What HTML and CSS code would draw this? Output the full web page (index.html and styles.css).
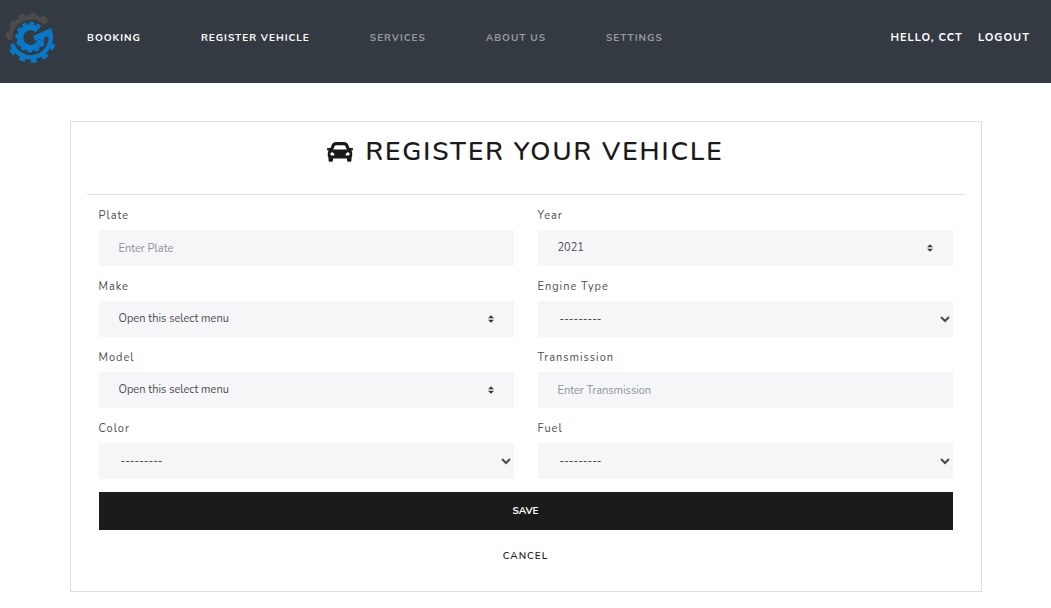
FILE: index.html
```html
<!DOCTYPE html>
<html lang="en">
<head>
<meta charset="utf-8">
<meta name="viewport" content="width=device-width, initial-scale=1">
<title>Register your vehicle</title>
<link rel="stylesheet" href="styles.css">
</head>
<body>
<header class="navbar">
  <a class="brand" href="#" aria-label="Home">
    <svg class="logo" viewBox="17 38 150 156" fill="none" aria-hidden="true">
      <g stroke="#4b4b4b">
        <path d="M30 121A62 62 0 0 1 137 73" stroke-width="14"/>
        <path d="M23 121A69 69 0 0 1 145 70" stroke-width="12" stroke-dasharray="18 18" stroke-dashoffset="-5"/>
      </g>
      <g stroke="#0878c8">
        <path d="M35 134A60 60 0 0 0 151 106" stroke-width="13"/>
        <path d="M27 139A69 69 0 0 0 161 115" stroke-width="12" stroke-dasharray="18 18" stroke-dashoffset="-12"/>
        <path d="M112 92A31 31 0 1 0 121 122" stroke-width="18"/>
        <path d="M120 83A42 42 0 1 0 132 122" stroke-width="8" stroke-dasharray="13 9"/>
      </g>
      <path d="M153 86L99 110 104 126 115 118 130 126 133 112 148 112 158 110Z" fill="#0878c8"/>
    </svg>
  </a>
  <nav class="menu">
    <a class="menu-link active" href="#">Booking</a>
    <a class="menu-link active" href="#">Register vehicle</a>
    <a class="menu-link" href="#">Services</a>
    <a class="menu-link" href="#">About us</a>
    <a class="menu-link" href="#">Settings</a>
  </nav>
  <div class="account">
    <a class="account-link" href="#">Hello, CCT</a>
    <a class="account-link" href="#">Logout</a>
  </div>
</header>
<main class="page">
  <section class="card">
    <h1 class="title">
      <svg class="car" viewBox="0 0 26 20" aria-hidden="true">
        <path fill="#1b1b1b" fill-rule="evenodd" d="M9 0h8c2 0 3.500 1 4.200 2.800L22.500 6H25c.8 0 1.200.5 1 1.200l-.2.800c-.1.400-.4.600-.9.600h-.8c.7.600 1.100 1.400 1.100 2.400v3c0 .7-.3 1.300-.7 1.800V18.200c0 .9-.6 1.500-1.500 1.500h-1.500c-.9 0-1.500-.6-1.500-1.500v-1.600H6v1.600c0 .9-.6 1.500-1.500 1.500H3c-.9 0-1.500-.6-1.500-1.500v-2.400A2.700 2.700 0 0 1 .8 14v-3c0-1 .4-1.800 1.100-2.400h-.8c-.5 0-.8-.2-.9-.6L0 7.200C-.2 6.500.2 6 1 6h2.500l1.300-3.200C5.500 1 7 0 9 0Zm0 3.300c-.7 0-1.100.3-1.400.9L6.200 7.600h13.600l-1.400-3.400c-.3-.6-.7-.9-1.400-.9ZM5 10.200a1.700 1.700 0 1 0 0 3.400c1 0 2.500.1 2.500-.8 0-1-1.300-2.600-2.500-2.600Zm16 0c-1.200 0-2.500 1.600-2.500 2.600 0 .9 1.500.8 2.500.8a1.700 1.700 0 1 0 0-3.400Z"/>
      </svg>
      <span>Register your vehicle</span>
    </h1>
    <form class="form">
      <div class="fields">
        <div class="field">
          <label for="plate">Plate</label>
          <input class="control" id="plate" type="text" placeholder="Enter Plate">
        </div>
        <div class="field">
          <label for="year">Year</label>
          <select class="control custom" id="year"><option>2021</option></select>
        </div>
        <div class="field">
          <label for="make">Make</label>
          <select class="control custom" id="make"><option>Open this select menu</option></select>
        </div>
        <div class="field">
          <label for="engine">Engine Type</label>
          <select class="control plain" id="engine"><option>---------</option></select>
        </div>
        <div class="field">
          <label for="model">Model</label>
          <select class="control custom" id="model"><option>Open this select menu</option></select>
        </div>
        <div class="field">
          <label for="transmission">Transmission</label>
          <input class="control" id="transmission" type="text" placeholder="Enter Transmission">
        </div>
        <div class="field">
          <label for="color">Color</label>
          <select class="control plain" id="color"><option>---------</option></select>
        </div>
        <div class="field">
          <label for="fuel">Fuel</label>
          <select class="control plain" id="fuel"><option>---------</option></select>
        </div>
      </div>
      <button class="save" type="submit">Save</button>
      <a class="cancel" href="#">Cancel</a>
    </form>
  </section>
</main>
</body>
</html>
```
FILE: styles.css
```css
* {
  box-sizing: border-box;
}

body {
  margin: 0;
  background: #fff;
  color: #1b1b1b;
  font-family: Nunito, "Nunito Sans", Lato, "Open Sans", sans-serif;
  font-size: 11px;
}

a {
  color: inherit;
  text-decoration: none;
}

.navbar {
  display: flex;
  align-items: center;
  padding: 12px 21px 19px 6px;
  background: #343a42;
  color: #fff;
  font-weight: 700;
  text-transform: uppercase;
  line-height: 16px;
}

.brand {
  display: flex;
}

.logo {
  width: 50px;
  height: 52px;
}

.menu {
  display: flex;
  flex: 1;
  gap: 60px;
  margin-left: 31px;
  font-size: 10px;
  letter-spacing: 1px;
}

.menu-link {
  color: #989b9e;
}

.menu-link.active {
  color: #fff;
}

.account {
  display: flex;
  gap: 15px;
  font-size: 11px;
  letter-spacing: 1px;
}

.page {
  max-width: 944px;
  margin: 0 auto;
  padding: 38px 16px 16px;
}

.card {
  padding: 0 16px 27px;
  border: 1px solid #dedede;
}

.title {
  display: flex;
  align-items: center;
  justify-content: center;
  gap: 12px;
  margin: 0;
  padding: 12px 0 24px;
  border-bottom: 1px solid #e3e3e3;
  font-size: 26px;
  font-weight: 600;
  line-height: 36px;
  letter-spacing: 2px;
  text-transform: uppercase;
}

.car {
  width: 26px;
  height: 20px;
}

.form {
  display: flex;
  flex-direction: column;
  padding: 13px 12px 0;
}

.fields {
  display: grid;
  grid-template-columns: 1fr 1fr;
  gap: 13px 24px;
}

.field {
  display: flex;
  flex-direction: column;
  gap: 6px;
}

.field label {
  color: #4a4d50;
  line-height: 16px;
  letter-spacing: 1px;
}

.control {
  width: 100%;
  height: 36px;
  padding: 0 20px;
  border: 0;
  border-radius: 0;
  background: #f6f6f9;
  color: #4a4d50;
  font: inherit;
  appearance: none;
}

.control::placeholder {
  color: #8a939c;
  opacity: 1;
}

.custom {
  padding-bottom: 2px;
  background: #f6f6f9 url("data:image/svg+xml,%3Csvg xmlns='http://www.w3.org/2000/svg' viewBox='0 0 4 5'%3E%3Cpath fill='%23343a40' d='M2 0L0 2h4zm0 5L0 3h4z'/%3E%3C/svg%3E") no-repeat right 20px center / 6px 8px;
}

.plain {
  padding-left: 22px;
  background: #f6f6f9 url("data:image/svg+xml,%3Csvg xmlns='http://www.w3.org/2000/svg' viewBox='0 0 10 8'%3E%3Cpath fill='none' stroke='%234a4a4a' stroke-width='2' d='M1 2l4 4 4-4'/%3E%3C/svg%3E") no-repeat right 3px center / 10px 8px;
}

.save {
  height: 38px;
  margin-top: 13px;
  border: 0;
  background: #1b1b1b;
  color: #fff;
  font: inherit;
  font-size: 10px;
  font-weight: 700;
  text-transform: uppercase;
}

.cancel {
  align-self: center;
  margin-top: 18px;
  font-size: 10px;
  font-weight: 600;
  line-height: 16px;
  letter-spacing: 1px;
  text-transform: uppercase;
}
```
